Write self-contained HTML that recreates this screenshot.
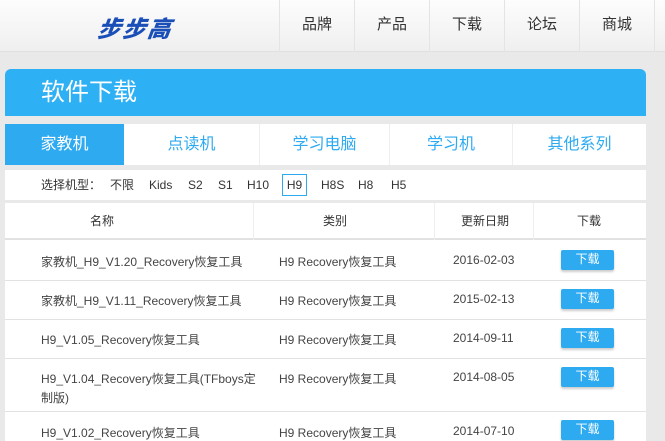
<!DOCTYPE html>
<html><head><meta charset="utf-8"><style>
*{margin:0;padding:0;box-sizing:border-box}
html,body{width:665px;height:441px;overflow:hidden}
body{background:#e9e9e9;font-family:"Liberation Sans","Noto Sans CJK SC",sans-serif;position:relative}
.hd{position:absolute;left:0;top:0;width:665px;height:52px;background:linear-gradient(#fdfdfd,#efefef);border-bottom:1px solid #e0e0e0}
.logo{position:absolute;left:98px;top:10px;font-size:23px;font-weight:900;font-style:italic;color:#1b4fb8;letter-spacing:2px;transform:skewX(-8deg)}
.nav{position:absolute;left:279px;top:0;height:52px;display:flex}
.nav div{width:75px;height:52px;border-left:1px solid #e4e4e4;text-align:center;line-height:50px;font-size:15px;color:#333}
.abs{position:absolute}
.blue{left:5px;top:69px;width:641px;height:47px;background:#2eb0f4;border-radius:6px 6px 0 0;color:#fff;font-size:24px;padding-left:36px;line-height:47px}
.tabs{left:5px;top:124px;width:641px;height:41px;background:#fff;display:flex}
.tabs div{text-align:center;line-height:41px;font-size:16px;color:#2eaaf0;border-left:1px solid #eee}
.filter{left:5px;top:170px;width:641px;height:30px;background:#fff;font-size:12px;color:#333;line-height:30px}
.filter span{position:absolute}
.tbl{left:5px;top:203px;width:641px;height:238px;background:#fff;overflow:hidden}
.th{position:absolute;top:0;height:37px;line-height:37px;font-size:12px;color:#333;border-bottom:2px solid #e2e2e2;width:641px}
.row{position:absolute;left:0;width:641px;border-bottom:1px solid #e2e2e2;font-size:12px;color:#444}
.row span{position:absolute}
.btn{position:absolute;left:556px;width:53px;height:20px;background:#2eaaf0;color:#fff;text-align:center;line-height:19px;border-radius:2px;box-shadow:0 2px 2px rgba(0,0,0,.2)}
</style></head><body>
<div class="hd"><div class="logo">步步高</div>
<div class="nav"><div>品牌</div><div>产品</div><div>下载</div><div>论坛</div><div>商城</div><div style="width:12px"></div></div></div>
<div class="abs blue">软件下载</div>
<div class="abs tabs">
<div style="width:119px;background:#2eaaf0;color:#fff;border:0">家教机</div>
<div style="width:135px;border-left:0">点读机</div>
<div style="width:130px">学习电脑</div>
<div style="width:123px">学习机</div>
<div style="width:134px">其他系列</div></div>
<div class="abs filter">
<span style="left:36px">选择机型：</span><span style="left:105px">不限</span><span style="left:144px">Kids</span><span style="left:183px">S2</span><span style="left:213px">S1</span><span style="left:242px">H10</span>
<span style="left:277px;top:4px;width:25px;height:22px;border:1px solid #2eaaf0;line-height:20px;text-align:center">H9</span>
<span style="left:316px">H8S</span><span style="left:353px">H8</span><span style="left:386px">H5</span></div>
<div class="abs tbl">
<div class="th"><span class="abs" style="left:85px">名称</span><span class="abs" style="left:248px;width:1px;height:37px;background:#eee"></span><span class="abs" style="left:318px">类别</span><span class="abs" style="left:429px;width:1px;height:37px;background:#eee"></span><span class="abs" style="left:456px">更新日期</span><span class="abs" style="left:528px;width:1px;height:37px;background:#eee"></span><span class="abs" style="left:572px">下载</span></div>
<div class="row" style="top:38px;height:40px"><span style="left:36px;top:12px">家教机_H9_V1.20_Recovery恢复工具</span><span style="left:274px;top:12px">H9 Recovery恢复工具</span><span style="left:448px;top:12px">2016-02-03</span><div class="btn" style="top:9px">下载</div></div>
<div class="row" style="top:78px;height:39px"><span style="left:36px;top:11px">家教机_H9_V1.11_Recovery恢复工具</span><span style="left:274px;top:11px">H9 Recovery恢复工具</span><span style="left:448px;top:11px">2015-02-13</span><div class="btn" style="top:8px">下载</div></div>
<div class="row" style="top:117px;height:39px"><span style="left:36px;top:11px">H9_V1.05_Recovery恢复工具</span><span style="left:274px;top:11px">H9 Recovery恢复工具</span><span style="left:448px;top:11px">2014-09-11</span><div class="btn" style="top:8px">下载</div></div>
<div class="row" style="top:156px;height:53px"><span style="left:36px;top:11px;width:220px;line-height:19px">H9_V1.04_Recovery恢复工具(TFboys定制版)</span><span style="left:274px;top:11px">H9 Recovery恢复工具</span><span style="left:448px;top:11px">2014-08-05</span><div class="btn" style="top:8px">下载</div></div>
<div class="row" style="top:209px;height:40px;border:0"><span style="left:36px;top:12px">H9_V1.02_Recovery恢复工具</span><span style="left:274px;top:12px">H9 Recovery恢复工具</span><span style="left:448px;top:12px">2014-07-10</span><div class="btn" style="top:8px">下载</div></div>
</div>
</body></html>
